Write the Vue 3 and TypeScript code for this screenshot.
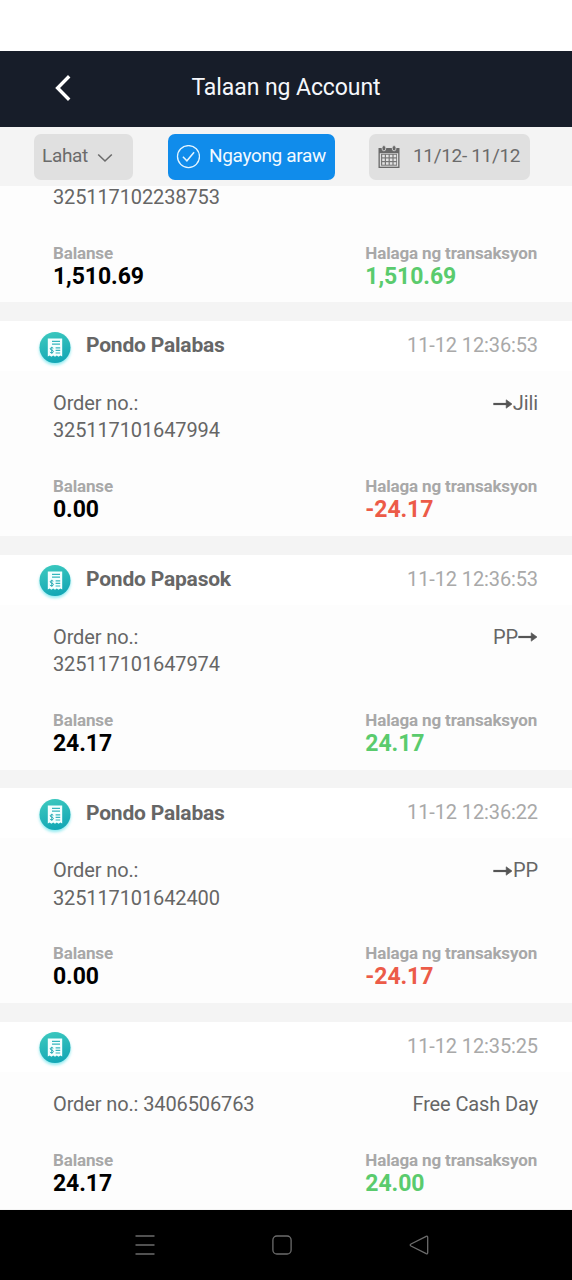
<script setup lang="ts">
interface Entry {
  title?: string
  time?: string
  order: string[]
  note?: string
  arrow?: 'before' | 'after'
  balance: string
  amount: string
}

// The first entry is scrolled: only the end of its order number is in view.
const entries: Entry[] = [
  { order: ['325117102238753'], balance: '1,510.69', amount: '1,510.69' },
  { title: 'Pondo Palabas', time: '11-12 12:36:53', order: ['Order no.:', '325117101647994'], note: 'Jili', arrow: 'before', balance: '0.00', amount: '-24.17' },
  { title: 'Pondo Papasok', time: '11-12 12:36:53', order: ['Order no.:', '325117101647974'], note: 'PP', arrow: 'after', balance: '24.17', amount: '24.17' },
  { title: 'Pondo Palabas', time: '11-12 12:36:22', order: ['Order no.:', '325117101642400'], note: 'PP', arrow: 'before', balance: '0.00', amount: '-24.17' },
  { time: '11-12 12:35:25', order: ['Order no.: 3406506763'], note: 'Free Cash Day', balance: '24.17', amount: '24.00' },
]

const gridCols = [4.2, 8, 11.8, 15.6]
const gridRows = [9.8, 13.5, 17.2]
</script>

<template>
  <div class="screen">
    <div class="status"></div>
    <header class="bar">
      <svg class="back" width="18" height="28" viewBox="0 0 18 28">
        <path d="M15.2 2.3 L3.6 14 L15.2 25.7" fill="none" stroke="#fff" stroke-width="3.4" />
      </svg>
      <h1>Talaan ng Account</h1>
    </header>

    <div class="filters">
      <button class="chip type">
        <span>Lahat</span>
        <svg width="16" height="10" viewBox="0 0 16 10">
          <path d="M1.2 1.5 L8 8 L14.8 1.5" fill="none" stroke="#6b6b6b" stroke-width="1.6" />
        </svg>
      </button>
      <button class="chip today">
        <svg width="24" height="24" viewBox="0 0 24 24">
          <circle cx="12.5" cy="11.6" r="11" fill="none" stroke="#e4f5ff" stroke-width="1.3" />
          <path d="M6.9 11.8 L10.9 15.8 L18.1 7.2" fill="none" stroke="#e4f5ff" stroke-width="1.5" />
        </svg>
        <span>Ngayong araw</span>
      </button>
      <button class="chip range">
        <svg width="22" height="24" viewBox="0 0 22 24">
          <path d="M.5 3 H21.5 V23 H.5 Z" fill="#686868" />
          <path d="M1.8 8.2 H20.2 V21.7 H1.8 Z" fill="#dedede" />
          <path d="M3 8.8 H19 V20.7 H3 Z" fill="#777" />
          <template v-for="y in gridRows" :key="y">
            <rect v-for="x in gridCols" :key="x" :x="x" :y="y" width="2.6" height="2.5" fill="#e3e3e3" />
          </template>
          <rect x="4.1" y=".6" width="3.6" height="5.2" rx="1.8" fill="#686868" stroke="#dedede" stroke-width=".8" />
          <rect x="14.3" y=".6" width="3.6" height="5.2" rx="1.8" fill="#686868" stroke="#dedede" stroke-width=".8" />
        </svg>
        <span>11/12- 11/12</span>
      </button>
    </div>

    <main class="list">
      <article v-for="(e, i) in entries" :key="i" class="card">
        <div v-if="e.time" class="head">
          <svg class="badge" width="40" height="40" viewBox="0 0 40 40">
            <defs>
              <linearGradient :id="'teal' + i" x1=".3" y1="0" x2=".6" y2="1">
                <stop offset="0" stop-color="#3bc8be" />
                <stop offset="1" stop-color="#12a6b5" />
              </linearGradient>
            </defs>
            <circle class="glow" cx="20" cy="21.5" r="15.5" fill="#8eeaf0" />
            <circle cx="20" cy="19.5" r="15.5" :fill="`url(#teal${i})`" />
            <path d="M12.8 10.6 H27.2 V28.6 L25.4 27.5 L23.6 28.8 L21.8 27.5 L20 28.8 L18.2 27.5 L16.4 28.8 L14.6 27.5 L12.8 28.6 Z" fill="#f4ffff" />
            <path d="M17 13.4 H25 M17 16.2 H25 M20.6 19.8 H25.2 M20.6 22.4 H25.2 M20.6 25 H25.2" stroke="#35b6bd" stroke-width="1.2" />
            <path d="M18.3 20.2 C17.4 19.2 15.1 19.4 15.2 20.9 C15.3 22.5 18.4 21.8 18.4 23.5 C18.4 25 15.9 25.2 14.9 24.1 M16.8 18.8 V25.8" fill="none" stroke="#2aabb5" stroke-width="1" />
          </svg>
          <strong v-if="e.title" class="title">{{ e.title }}</strong>
          <time>{{ e.time }}</time>
        </div>
        <div class="body">
          <div class="order">
            <div class="number">
              <div v-for="line in e.order" :key="line">{{ line }}</div>
            </div>
            <div v-if="e.note" class="note">
              <span v-if="e.arrow === 'after'">{{ e.note }}</span>
              <svg v-if="e.arrow" width="20" height="12" viewBox="0 0 20 12">
                <path d="M.3 6 H14.5" stroke="#555" stroke-width="2.2" />
                <path d="M13.2 1.8 L19 6 L13.2 10.2 Z" fill="#555" stroke="#555" stroke-width=".6" stroke-linejoin="round" />
              </svg>
              <span v-if="e.arrow !== 'after'">{{ e.note }}</span>
            </div>
          </div>
          <div class="money">
            <div>
              <div class="label">Balanse</div>
              <div class="value">{{ e.balance }}</div>
            </div>
            <div class="transaction">
              <div class="label">Halaga ng transaksyon</div>
              <div class="value" :class="e.amount.startsWith('-') ? 'out' : 'in'">{{ e.amount }}</div>
            </div>
          </div>
        </div>
      </article>
    </main>

    <nav class="system">
      <svg width="22" height="22" viewBox="0 0 22 22">
        <path d="M1.5 2 H20.5 M1.5 11 H20.5 M1.5 20 H20.5" stroke="#6c6c6c" stroke-width="1.3" />
      </svg>
      <svg width="22" height="22" viewBox="0 0 22 22">
        <rect x="1.9" y="2" width="18.2" height="18" rx="4" fill="none" stroke="#6c6c6c" stroke-width="1.3" />
      </svg>
      <svg width="22" height="22" viewBox="0 0 22 22">
        <path d="M18.2 2.4 Q19.7 1.7 19.7 3.4 V18.6 Q19.7 20.3 18.2 19.6 L3 12 Q1.4 11 3 10 Z" fill="none" stroke="#6c6c6c" stroke-width="1.3" />
      </svg>
    </nav>
  </div>
</template>

<style>
body {
  margin: 0;
}
</style>

<style scoped>
.screen {
  display: flex;
  flex-direction: column;
  width: 572px;
  height: 1280px;
  overflow: hidden;
  background: #f4f4f4;
  color: #666;
  font-family: Roboto, "Liberation Sans", sans-serif;
}
svg {
  display: block;
  flex: none;
}
.status {
  flex: none;
  height: 51px;
  background: #fff;
}
.bar {
  flex: none;
  display: grid;
  grid-template-columns: 72px 1fr 72px;
  align-items: center;
  height: 76px;
  background: #171d29;
}
.back {
  justify-self: end;
  margin-top: -3px;
}
h1 {
  margin: -3px 0 0;
  color: #f5f7fb;
  font-size: 23px;
  font-weight: 400;
  letter-spacing: -0.08px;
  line-height: 29px;
  text-align: center;
}
.filters {
  flex: none;
  display: flex;
  box-sizing: border-box;
  height: 59px;
  padding: 7px 42px 0 34px;
}
.chip {
  display: flex;
  align-items: center;
  box-sizing: border-box;
  height: 46px;
  padding: 0 8px;
  border: 0;
  border-radius: 7px;
  background: #e0e0e0;
  color: #6b6b6b;
  font: 400 19px/24px Roboto, "Liberation Sans", sans-serif;
  letter-spacing: -0.33px;
  white-space: nowrap;
}
.chip span {
  margin-top: -2px;
}
.type {
  width: 99px;
  gap: 9.5px;
}
.type svg {
  margin-top: 2px;
}
.today {
  width: 167px;
  margin-left: 35px;
  gap: 9px;
  background: #108ceb;
  color: #f3faff;
}
.range {
  width: 161px;
  margin-left: 34px;
  padding-left: 9px;
  gap: 13px;
}
.list {
  flex: 1;
  min-height: 0;
  overflow: hidden;
}
.card {
  margin-bottom: 18.6px;
  background: #fdfdfd;
}
.head {
  display: flex;
  align-items: center;
  height: 50px;
  padding: 0 34px 0 35px;
  background: #fff;
}
.badge {
  margin-top: 3.4px;
}
.glow {
  filter: blur(1.5px);
}
.title {
  margin-top: -1px;
  margin-left: 11px;
  font-size: 21px;
  font-weight: 700;
  letter-spacing: -0.2px;
}
time {
  margin-left: auto;
  margin-top: -1.4px;
  color: #a9a9a9;
  font-size: 20px;
  letter-spacing: -0.12px;
}
.body {
  padding: 19.1px 34px 13.6px 53px;
}
.card:first-child .body {
  margin-top: -1.9px;
  padding-top: 0;
}
.order {
  display: flex;
  justify-content: space-between;
  font-size: 20px;
  letter-spacing: -0.12px;
  line-height: 27.3px;
}
.note {
  display: flex;
  align-items: center;
  height: 27.3px;
}
.money {
  display: flex;
  justify-content: space-between;
  margin-top: 30.7px;
}
.card:first-child .money {
  margin-top: 30.4px;
}
.transaction {
  width: 172.7px;
  white-space: nowrap;
}
.label {
  color: #a8a8a8;
  font-size: 17px;
  font-weight: 700;
  letter-spacing: -0.14px;
  line-height: 23px;
}
.value {
  color: #000;
  font-size: 23px;
  font-weight: 700;
  letter-spacing: -0.08px;
  line-height: 24px;
}
.in {
  color: #5acb6d;
}
.out {
  color: #ec5b48;
}
.system {
  flex: none;
  display: flex;
  align-items: center;
  justify-content: space-between;
  box-sizing: border-box;
  height: 70px;
  padding: 0 142px 0 134px;
  background: #000;
}
</style>
